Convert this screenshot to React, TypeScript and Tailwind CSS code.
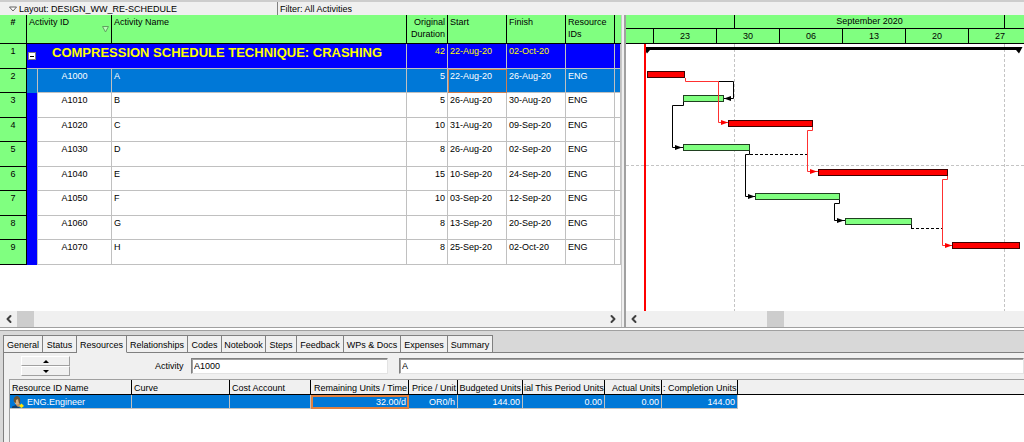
import clsx from "clsx";
import { LuChevronLeft, LuChevronRight } from "react-icons/lu";

export default function App() {
    return (
        <main className="min-h-screen flex flex-col bg-[#f0f0f0] text-black text-[9px] leading-3 overflow-hidden font-['Liberation_Sans',sans-serif]">
            <LayoutBar />
            <section className="flex bg-white border-b border-[#a0a0a0]">
                <ActivityGrid />
                <div className="w-[5px] shrink-0 bg-[#f0f0f0] border-l border-r-2 border-l-[#c8c8c8] border-r-[#a0a0a0]" />
                <Gantt />
            </section>
            <div className="h-[2px] bg-white" />
            <Details />
        </main>
    );
}

function LayoutBar() {
    return (
        <header className="flex h-[15px] border-t-2 border-[#cdcdcd] bg-[#f0f0f0]">
            <button className="w-[278px] flex items-center gap-[2px] pl-[9px] border-r border-[#808080] whitespace-nowrap">
                <svg width="8" height="6" viewBox="0 0 8 6">
                    <path d="M.5 1H7.5L4 5Z" fill="#fff" stroke="#606060" />
                </svg>
                Layout: DESIGN_WW_RE-SCHEDULE
            </button>
            <p className="flex items-center pl-[2px]">Filter: All Activities</p>
        </header>
    );
}

function ActivityGrid() {
    const head = "bg-[#80ff80] border-b border-r border-black align-top font-normal pt-px px-[2px]";
    return (
        <div className="w-[621px] shrink-0 flex flex-col">
            <table className="w-full table-fixed border-separate border-spacing-0">
                <colgroup>
                    <col className="w-[27px]" />
                    <col className="w-[11px]" />
                    <col className="w-[74px]" />
                    <col />
                    <col className="w-[41px]" />
                    <col className="w-[59px]" />
                    <col className="w-[59px]" />
                    <col className="w-[49px]" />
                    <col className="w-[6px]" />
                </colgroup>
                <thead>
                    <tr className="h-[29px] text-left">
                        <th className="bg-[#80ff80] border-b border-r border-black align-top text-center pt-px">#</th>
                        <th colSpan={2} className={head}>
                            <div className="flex justify-between">
                                Activity ID
                                <svg width="7" height="7" viewBox="0 0 7 7" className="mt-[10px]">
                                    <path d="M.5 .5H6.5L3.5 6Z" fill="#b8ffb8" stroke="#60a060" />
                                </svg>
                            </div>
                        </th>
                        <th className={head}>Activity Name</th>
                        <th className={clsx(head, "text-right")}>Original Duration</th>
                        <th className={head}>Start</th>
                        <th className={head}>Finish</th>
                        <th className={head}>Resource IDs</th>
                        <th className="bg-[#80ff80] border-b border-black" />
                    </tr>
                </thead>
                <tbody>
                    <tr className="h-[25px] bg-[#0000ff] text-[#ffff00]">
                        <RowNumber value={1} />
                        <td colSpan={3} className="border-b border-r border-[#c0c0c0] p-0 align-top">
                            <div className="flex">
                                <button aria-label="Collapse" className="mt-[8px] ml-px size-[8px] shrink-0 bg-white border border-[#808080] flex items-center justify-center">
                                    <span className="w-[4px] h-px bg-black" />
                                </button>
                                <span className="ml-4 text-[13px] leading-[18px] font-bold whitespace-nowrap">
                                    COMPRESSION SCHEDULE TECHNIQUE: CRASHING
                                </span>
                            </div>
                        </td>
                        <Cell className="text-right">42</Cell>
                        <Cell>22-Aug-20</Cell>
                        <Cell>02-Oct-20</Cell>
                        <Cell />
                        <Cell />
                    </tr>
                    {activities.map((a, index) => {
                        const selected = index === 0;
                        return (
                            <tr key={a.id} className={clsx(index % 2 ? "h-[25px]" : "h-[24px]", selected && "bg-[#0078d7] text-white")}>
                                <RowNumber value={index + 2} />
                                <td className={clsx("border-r border-[#c0c0c0]", !selected && "bg-[#0000ff]")} />
                                <Cell className="text-center">{a.id}</Cell>
                                <Cell>{a.name}</Cell>
                                <Cell className="text-right">{a.duration}</Cell>
                                <Cell className={selected ? "outline outline-[#d08050] -outline-offset-1" : ""}>{a.start}</Cell>
                                <Cell>{a.finish}</Cell>
                                <Cell>ENG</Cell>
                                <Cell />
                            </tr>
                        );
                    })}
                </tbody>
            </table>
            <div className="mt-auto h-4 flex items-center bg-[#f0f0f0] text-[#404040]">
                <button aria-label="Scroll left" className="w-[17px] flex justify-center"><LuChevronLeft size={12} strokeWidth={4} /></button>
                <div className="w-[17px] h-full bg-[#cdcdcd]" />
                <button aria-label="Scroll right" className="ml-auto w-[17px] flex justify-center"><LuChevronRight size={12} strokeWidth={4} /></button>
            </div>
        </div>
    );
}

function RowNumber({ value }: { value: number }) {
    return <th className="bg-[#80ff80] text-black font-normal align-top p-0 pt-px border-b border-r border-black">{value}</th>;
}

function Cell({ className, children }: { className?: string; children?: React.ReactNode }) {
    return <td className={clsx("border-b border-r border-[#c0c0c0] align-top pt-px px-[2px] whitespace-nowrap", className)}>{children}</td>;
}

function Gantt() {
    return (
        <div className="flex-1 min-w-0 overflow-hidden">
            <div className="flex h-[14px] bg-[#80ff80] border-b border-black text-center">
                <span className="w-[109px] shrink-0 border-r border-black" />
                <span className="w-[270px] shrink-0 border-r border-black">September 2020</span>
            </div>
            <div className="flex h-[15px] bg-[#80ff80] border-b border-black text-center">
                <span className="w-[28px] shrink-0 border-r border-black" />
                {weeks.map((week) => (
                    <span key={week} className="w-[63px] shrink-0 border-r border-black pt-px">{week}</span>
                ))}
            </div>
            <svg width="398" height="267" fill="none" className="block">
                <g stroke="#c4c4c4" strokeDasharray="3 2">
                    <path d="M108.5 0V267M0 121.5H398" />
                    <path d="M378.5 0V267" />
                </g>
                <path d="M20 3H396.500L393 9.500L390 6H24L21 9.500L20 8Z" fill="#000" />
                {bars.map((bar) => (
                    <rect
                        key={bar.y}
                        x={bar.x + 0.5}
                        y={bar.y + 0.5}
                        width={bar.width - 1}
                        height={6}
                        fill={bar.critical ? "#ff0000" : "#80ff80"}
                        stroke={bar.critical ? "#400000" : "#204020"}
                    />
                ))}
                <g stroke="#000">
                    <path d="M92.5 37.500H107.500V54.500H98" />
                    <path d="M57.500 58V61.500H46.500V103.500H57" />
                    <path d="M123.500 107V110.500H119.500V152.500H129" />
                    <path d="M213.500 156V159.500H208.500V176.500H219" />
                    <path d="M285.500 181V184" />
                    <path d="M124 110.500H181M285 184.500H316" strokeDasharray="3 2" />
                </g>
                <g stroke="#ff3030">
                    <path d="M59.500 34V37.500H92.500V78.500H102" />
                    <path d="M186.500 83V86.500H181.500V127.500H192" />
                    <path d="M321.500 132V135.500H316.500V201.500H326" />
                </g>
                <path d="M98 54.500L105 52V57Z M56 103.500L49 101V106Z M129 152.500L122 150V155Z M218 176.500L211 174V179Z" fill="#000" />
                <path d="M102 78.500L95 76V81Z M191 127.500L184 125V130Z M326 201.500L319 199V204Z" fill="#ff0000" />
                <path d="M19 0V267" stroke="#ff0000" strokeWidth="2" />
            </svg>
            <div className="h-4 flex items-center bg-[#f0f0f0] text-[#404040]">
                <button aria-label="Scroll left" className="w-[16px] flex justify-center"><LuChevronLeft size={12} strokeWidth={4} /></button>
                <div className="ml-[125px] w-[17px] h-full bg-[#cdcdcd]" />
            </div>
        </div>
    );
}

function Details() {
    const field = "h-4 bg-white border border-t-[#808080] border-l-[#808080] border-r-[#e3e3e3] border-b-[#e3e3e3] shadow-[inset_1px_1px_0_#a0a0a0] pl-[2px] outline-none";
    return (
        <section className="flex-1 flex flex-col bg-[#d8d8d8] border-t border-[#a0a0a0] pl-[3px] pt-1">
            <nav className="flex h-[18px]">
                {tabs.map((tab) => (
                    <button
                        key={tab.label}
                        className={clsx(
                            "shrink-0 whitespace-nowrap pt-px border-t border-r border-b border-[#808080] bg-[#f0f0f0] first:border-l",
                            tab.label === "Resources" && "border-b-[#f0f0f0]",
                            tab.width
                        )}
                    >
                        {tab.label}
                    </button>
                ))}
                <div className="flex-1 border-b border-[#808080]" />
            </nav>
            <div className="flex-1 flex flex-col bg-[#f0f0f0] border-l border-[#808080] pl-[5px]">
                <div className="flex h-[26px] items-center">
                    <div className="ml-3 w-[49px] flex flex-col">
                        <Spin label="Previous activity" path="M0 3L3 0L6 3Z" />
                        <Spin label="Next activity" path="M0 0L3 3L6 0Z" />
                    </div>
                    <label htmlFor="activity" className="ml-[85px] w-9">Activity</label>
                    <input id="activity" className={clsx(field, "w-[197px]")} defaultValue="A1000" />
                    <input aria-label="Activity name" className={clsx(field, "ml-[11px] flex-1 min-w-0")} defaultValue="A" />
                </div>
                <div className="flex-1 bg-white border-t border-l border-[#a0a0a0]">
                    <table className="w-full table-fixed border-separate border-spacing-0">
                        <thead>
                            <tr className="h-[15px] bg-[#f0f0f0]">
                                {resourceColumns.map((column) => (
                                    <th
                                        key={column.label}
                                        className={clsx(
                                            "pb-0 pt-px font-normal whitespace-nowrap border-b border-r border-black",
                                            column.right ? "text-right px-px" : "text-left px-[2px]",
                                            column.width
                                        )}
                                    >
                                        {column.label}
                                    </th>
                                ))}
                                <th className="border-b border-black" />
                            </tr>
                        </thead>
                        <tbody>
                            <tr className="h-[14px] text-white">
                                {resourceColumns.map((column, index) => (
                                    <td
                                        key={column.label}
                                        className={clsx(
                                            "p-0 bg-[#0078d7] border-r border-b border-[#c0c0c0]",
                                            index === 3 && "outline-2 outline-[#e08040] -outline-offset-2"
                                        )}
                                    >
                                        <div className={clsx("flex px-[2px]", column.right && "justify-end")}>
                                            {index === 0 && <Person />}
                                            {column.value}
                                        </div>
                                    </td>
                                ))}
                                <td />
                            </tr>
                        </tbody>
                    </table>
                </div>
            </div>
        </section>
    );
}

function Spin({ label, path }: { label: string; path: string }) {
    return (
        <button aria-label={label} className="h-[10px] flex items-center justify-center border border-t-white border-l-white border-r-[#a0a0a0] border-b-[#a0a0a0]">
            <svg width="6" height="3"><path d={path} fill="#000" /></svg>
        </button>
    );
}

function Person() {
    return (
        <svg width="12" height="12" viewBox="0 0 12 12" className="mr-[3px] shrink-0">
            <path d="M0 12V10.500L4 9L8 12Z" fill="#12406e" />
            <path d="M4 7H7.500L8 10L6 11L4 9Z" fill="#c98f58" />
            <ellipse cx="5" cy="5" rx="2.500" ry="3.500" fill="#d9b080" />
            <path d="M2 6C1 2 3 0 5 0S9 2 8 7L7 7.500L6 3L4 4V7Z" fill="#6b5436" />
            <path d="M9.500 7.500L12 10L9.500 12L7 10Z" fill="#ffe600" />
        </svg>
    );
}

const weeks = ["23", "30", "06", "13", "20", "27"];

const activities = [
    { id: "A1000", name: "A", duration: 5, start: "22-Aug-20", finish: "26-Aug-20" },
    { id: "A1010", name: "B", duration: 5, start: "26-Aug-20", finish: "30-Aug-20" },
    { id: "A1020", name: "C", duration: 10, start: "31-Aug-20", finish: "09-Sep-20" },
    { id: "A1030", name: "D", duration: 8, start: "26-Aug-20", finish: "02-Sep-20" },
    { id: "A1040", name: "E", duration: 15, start: "10-Sep-20", finish: "24-Sep-20" },
    { id: "A1050", name: "F", duration: 10, start: "03-Sep-20", finish: "12-Sep-20" },
    { id: "A1060", name: "G", duration: 8, start: "13-Sep-20", finish: "20-Sep-20" },
    { id: "A1070", name: "H", duration: 8, start: "25-Sep-20", finish: "02-Oct-20" },
];

const bars = [
    { x: 21, y: 27, width: 38, critical: true },
    { x: 57, y: 51, width: 41, critical: false },
    { x: 102, y: 76, width: 85, critical: true },
    { x: 57, y: 100, width: 67, critical: false },
    { x: 192, y: 125, width: 130, critical: true },
    { x: 129, y: 149, width: 85, critical: false },
    { x: 219, y: 174, width: 67, critical: false },
    { x: 326, y: 198, width: 68, critical: true },
];

const tabs = [
    { label: "General", width: "w-[40px]" },
    { label: "Status", width: "w-[34px]" },
    { label: "Resources", width: "w-[50px]" },
    { label: "Relationships", width: "w-[61px]" },
    { label: "Codes", width: "w-[34px]" },
    { label: "Notebook", width: "w-[44px]" },
    { label: "Steps", width: "w-[31px]" },
    { label: "Feedback", width: "w-[47px]" },
    { label: "WPs & Docs", width: "w-[57px]" },
    { label: "Expenses", width: "w-[47px]" },
    { label: "Summary", width: "w-[45px]" },
];

const resourceColumns = [
    { label: "Resource ID Name", width: "w-[122px]", value: "ENG.Engineer" },
    { label: "Curve", width: "w-[98px]", value: "" },
    { label: "Cost Account", width: "w-[81px]", value: "" },
    { label: "Remaining Units / Time", width: "w-[98px]", value: "32.00/d", right: true },
    { label: "Price / Unit", width: "w-[49px]", value: "OR0/h", right: true },
    { label: "Budgeted Units", width: "w-[65px]", value: "144.00", right: true },
    { label: "ial This Period Units", width: "w-[82px]", value: "0.00", right: true },
    { label: "Actual Units", width: "w-[57px]", value: "0.00", right: true },
    { label: ": Completion Units", width: "w-[76px]", value: "144.00", right: true },
];
